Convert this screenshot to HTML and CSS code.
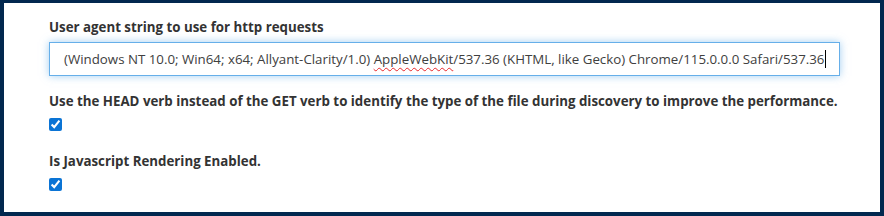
FILE: index.html
```html
<!DOCTYPE html>
<html lang="en">
<head>
<meta charset="utf-8">
<title>Crawler settings</title>
<link rel="stylesheet" href="styles.css">
</head>
<body>
<div class="panel">
  <div class="field">
    <label class="field-label" for="ua">User agent string to use for http requests</label>
    <div class="text-input" id="ua" role="textbox" tabindex="0">
      <span class="value">(Windows NT 10.0; Win64; x64; Allyant-Clarity/1.0) <span class="misspelled">AppleWebKit</span>/537.36 (KHTML, like Gecko) Chrome/115.0.0.0 Safari/537.36</span><span class="caret"></span>
    </div>
  </div>
  <div class="field">
    <label class="field-label" for="head">Use the HEAD verb instead of the GET verb to identify the type of the file during discovery to improve the performance.</label>
    <input class="check" type="checkbox" id="head" checked>
  </div>
  <div class="field">
    <label class="field-label" for="js">Is Javascript Rendering Enabled.</label>
    <input class="check" type="checkbox" id="js" checked>
  </div>
</div>
</body>
</html>
```
FILE: styles.css
```css
html, body {
  margin: 0;
  height: 216px;
  background: #02284f;
}
body {
  font-family: "Open Sans", "Noto Sans", sans-serif;
  font-size: 13.3px;
  color: #333333;
  overflow: hidden;
}
.panel {
  box-sizing: border-box;
  margin: 3px 4px 0 4px;
  height: 209px;
  background: #ffffff;
  padding: 14px 40px 0 45px;
}
.field {
  display: flex;
  flex-direction: column;
  align-items: flex-start;
}
.field + .field {
  margin-top: 15px;
}
.field:last-child {
  margin-top: 20px;
}
.field-label {
  display: block;
  font-weight: 700;
  line-height: 20px;
  color: #333333;
  white-space: nowrap;
}
.text-input {
  box-sizing: border-box;
  margin-top: 5px;
  width: 791px;
  height: 34px;
  border: 1px solid #66afe9;
  padding: 0 12px 0 14px;
  background: #ffffff;
  box-shadow: 0 0 8px rgba(102, 175, 233, 0.6);
  line-height: 20px;
  display: flex;
  align-items: center;
  white-space: nowrap;
  overflow: hidden;
  color: #404040;
  outline: none;
}
.misspelled {
  text-decoration: underline wavy #e8272b;
  text-decoration-thickness: 1px;
  text-underline-offset: 3px;
  text-decoration-skip-ink: none;
}
.caret {
  display: inline-block;
  width: 1px;
  height: 18px;
  background: #000000;
  margin-left: 1px;
}
.check {
  margin: 7px 0 0 0;
  width: 13px;
  height: 13px;
  accent-color: #0b74d5;
}
```
